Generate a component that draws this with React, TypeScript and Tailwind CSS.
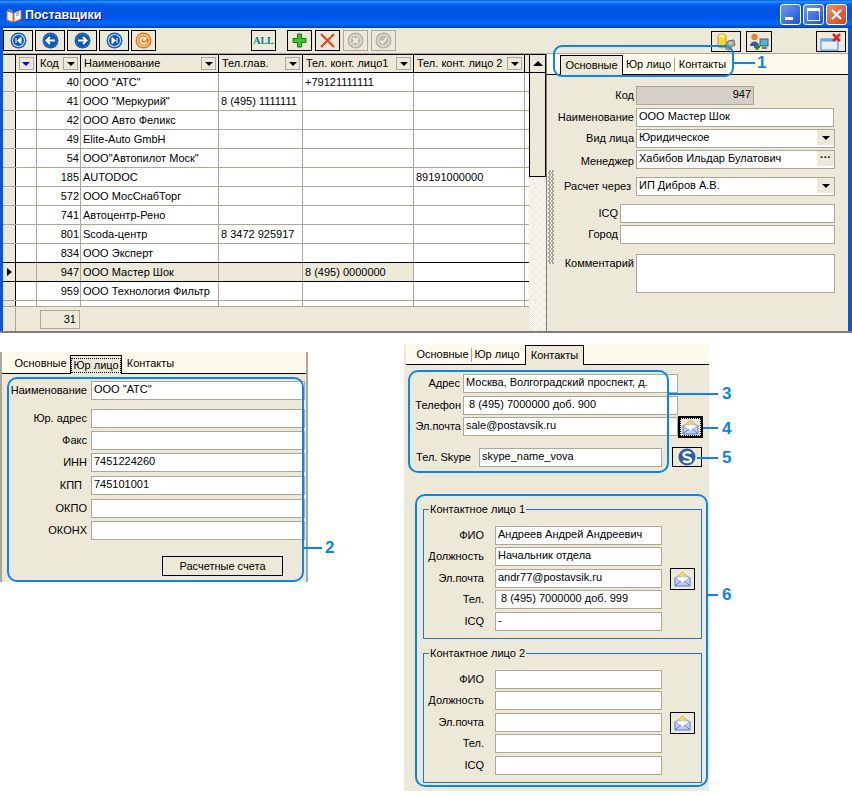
import React from "react";

const rows = [
  ["40", 'ООО "АТС"', "", "+79121111111", ""],
  ["41", 'ООО "Меркурий"', "8 (495) 1111111", "", ""],
  ["42", "ООО Авто Феликс", "", "", ""],
  ["49", "Elite-Auto GmbH", "", "", ""],
  ["54", 'ООО"Автопилот Моск"', "", "", ""],
  ["185", "AUTODOC", "", "", "89191000000"],
  ["572", "ООО МосСнабТорг", "", "", ""],
  ["741", "Автоцентр-Рено", "", "", ""],
  ["801", "Scoda-центр", "8 3472 925917", "", ""],
  ["834", "ООО Эксперт", "", "", ""],
  ["947", "ООО Мастер Шок", "", "8 (495) 0000000", ""],
  ["959", "ООО Технология Фильтр", "", "", ""],
  ["971", 'ООО "Югинвест Групп"', "7 (347) 000", "8 90707 10001", ""],
];

function Nav({ kind }: { kind: "first" | "prev" | "next" | "last" | "orange" }) {
  const orange = kind === "orange";
  const outer = orange ? "#d9781c" : "#1b5fb5";
  const mid = orange ? "#fbd9a8" : "#bcd6f5";
  const inner = orange ? "#f08a1e" : "#0f55b8";
  return (
    <svg width="17" height="17" viewBox="0 0 17 17">
      <circle cx="8.5" cy="8.5" r="8" fill={outer} />
      <circle cx="8.5" cy="8.5" r="6.6" fill={mid} />
      <circle cx="8.5" cy="8.5" r={kind === "prev" || kind === "next" ? 6.6 : 5.4} fill={inner} />
      {kind === "first" && <path d="M6 6v5M11 5.5v6L7.5 8.5z" stroke="#fff" fill="#fff" strokeWidth="1" />}
      {kind === "last" && <path d="M11 6v5M6 5.5v6l3.5-3z" stroke="#fff" fill="#fff" strokeWidth="1" />}
      {kind === "prev" && <path d="M13 8.5H5M8 5L4.5 8.5 8 12" stroke="#fff" fill="none" strokeWidth="2" />}
      {kind === "next" && <path d="M4 8.5h8M9 5l3.5 3.5L9 12" stroke="#fff" fill="none" strokeWidth="2" />}
      {orange && <path d="M11 6.5A3.2 3.2 0 1 0 11.5 10M8.5 8.5l3-3" stroke="#fff" fill="none" strokeWidth="1.6" />}
    </svg>
  );
}

function GrayIcon({ kind }: { kind: "x" | "check" }) {
  return (
    <svg width="17" height="17" viewBox="0 0 17 17">
      <circle cx="8.5" cy="8.5" r="8" fill="#b5b3a6" />
      <circle cx="8.5" cy="8.5" r="6.4" fill="#e3e1d6" />
      <circle cx="8.5" cy="8.5" r="5" fill="#bdbbae" />
      {kind === "x" ? (
        <path d="M6 6l5 5M11 6l-5 5" stroke="#f3f2ea" strokeWidth="1.8" />
      ) : (
        <path d="M5.5 8.5l2.2 2.4L11.5 6" stroke="#f3f2ea" strokeWidth="1.8" fill="none" />
      )}
    </svg>
  );
}

function Envelope() {
  return (
    <svg width="17" height="16" viewBox="0 0 17 16">
      <path d="M2 6.500L8.500 1 15 6.500z" fill="#f8dc62" stroke="#b8a650" strokeWidth="0.8" />
      <path d="M1 6.500h15v8.500H1z" fill="#bcd0f8" stroke="#5a78b8" />
      <path d="M1 6.500l7.500 5.500 7.500-5.500-7.500-1.500z" fill="#ffffff" stroke="#8ea3cf" strokeWidth="0.7" />
      <path d="M1 15l5.600-5M16 15l-5.600-5" stroke="#5a78b8" fill="none" />
    </svg>
  );
}

function Tab({ children, cls }: { children: React.ReactNode; cls: string }) {
  return <div className={"flex items-center justify-center whitespace-nowrap " + cls}>{children}</div>;
}

function Field({
  label,
  value,
  labelCls,
  inputCls,
  rowCls,
  children,
}: {
  label: string;
  value?: string;
  labelCls: string;
  inputCls: string;
  rowCls: string;
  children?: React.ReactNode;
}) {
  return (
    <div className={"flex items-start h-[19px] " + rowCls}>
      <div className={"text-right shrink-0 leading-[19px] whitespace-nowrap " + labelCls}>{label}</div>
      <div className={"h-[19px] box-border border border-[#aca899] bg-white px-[2px] leading-[15px] whitespace-nowrap overflow-hidden shrink-0 " + inputCls}>
        {value}
      </div>
      {children}
    </div>
  );
}

function MailBtn() {
  return (
    <div className="ml-[8px] -mt-[1px] w-[25px] h-[22px] border border-black flex items-center justify-center shrink-0">
      <Envelope />
    </div>
  );
}

function Group({ title, cls, vals }: { title: string; cls: string; vals: string[] }) {
  const lc = "w-[61px] pr-[1px]";
  const ic = "w-[167px] ml-[10px]";
  return (
    <div className={"relative ml-[19px] w-[279px] h-[130px] box-border border border-[#2a6fd0] pt-[16px] " + cls}>
      <span className="absolute -top-[8px] left-[5px] bg-[#ece9d8] px-[1px] leading-[15px] whitespace-nowrap">{title}</span>
      <Field label="ФИО" value={vals[0]} labelCls={lc} inputCls={ic} rowCls="" />
      <Field label="Должность" value={vals[1]} labelCls={lc} inputCls={ic} rowCls="mt-[2px]" />
      <Field label="Эл.почта" value={vals[2]} labelCls={lc} inputCls={ic} rowCls="mt-[3px]">
        <MailBtn />
      </Field>
      <Field label="Тел." value={vals[3]} labelCls={lc} inputCls={ic + " pl-[5px]"} rowCls="mt-[2px]" />
      <Field label="ICQ" value={vals[4]} labelCls={lc} inputCls={ic} rowCls="mt-[3px]" />
    </div>
  );
}

function Callout({ n, cls, numCls }: { n: string; cls: string; numCls: string }) {
  return (
    <>
      <div className={"absolute h-[2px] bg-[#0a84f0] " + cls} />
      <div className={"absolute text-[#0a84f0] font-bold text-[17px] leading-[17px] " + numCls}>{n}</div>
    </>
  );
}

const btn = "h-[21px] box-border border border-black flex items-center justify-center shrink-0";

export default function App() {
  return (
    <div className="relative w-[852px] h-[796px] bg-white overflow-hidden text-[11px] text-black font-['Liberation_Sans',sans-serif]">
      {/* Main window */}
      <div className="h-[333px] box-border border-b-2 border-[#7f7f7f] flex flex-col">
        <div className="h-[28px] shrink-0 flex items-center bg-[linear-gradient(to_bottom,#0058EE_0%,#3593FF_6%,#127DFF_10%,#0262EE_16%,#0057E5_24%,#0054E3_40%,#0055EB_60%,#005BF5_72%,#026AFE_80%,#0062EF_88%,#0052D6_94%,#0040AB_100%)]">
          <svg className="ml-[6px] mt-[3px]" width="16" height="15" viewBox="0 0 16 15">
            <path d="M1 3l6 2v9l-6-2z" fill="#f6f3ea" stroke="#d9722a" />
            <path d="M15 2L8 5v9l7-3z" fill="#fff" stroke="#d9722a" />
            <path d="M2 1l5 3" stroke="#3aa0d8" strokeWidth="1.5" />
            <path d="M10 6l3-1.500M10 8l3-1.500" stroke="#4a8fd0" />
          </svg>
          <div className="ml-[3px] mt-[3px] text-white font-bold text-[12.5px] [text-shadow:1px_1px_#0f1089] whitespace-nowrap">Поставщики</div>
          <div className="ml-auto mr-[5px] flex gap-[2px]">
            <div className="w-[21px] h-[21px] box-border border border-white rounded-[3px] bg-[linear-gradient(135deg,#6f9bf5,#1f4fd8)] flex items-end pl-[4px] pb-[4px]">
              <div className="w-[8px] h-[3px] bg-white" />
            </div>
            <div className="w-[21px] h-[21px] box-border border border-white rounded-[3px] bg-[linear-gradient(135deg,#6f9bf5,#1f4fd8)] flex items-center justify-center">
              <div className="w-[13px] h-[13px] box-border border border-white border-t-[3px]" />
            </div>
            <div className="w-[21px] h-[21px] box-border border border-white rounded-[3px] bg-[linear-gradient(135deg,#f0906a,#d0401c)] flex items-center justify-center">
              <svg width="13" height="13" viewBox="0 0 13 13">
                <path d="M2 2l9 9M11 2l-9 9" stroke="#fff" strokeWidth="2.2" />
              </svg>
            </div>
          </div>
        </div>

        <div className="flex-1 flex flex-col min-h-0 border-l-[3px] border-r-[4px] border-[#0a54de]">
          {/* Toolbar */}
          <div className="h-[26px] shrink-0 bg-[#ece9d8] border-b border-[#aca899] flex items-start pt-[2px]">
            <div className={btn + " w-[30px]"}><Nav kind="first" /></div>
            <div className={btn + " w-[30px] ml-[2px]"}><Nav kind="prev" /></div>
            <div className={btn + " w-[30px] ml-[2px]"}><Nav kind="next" /></div>
            <div className={btn + " w-[30px] ml-[2px]"}><Nav kind="last" /></div>
            <div className={btn + " w-[25px] ml-[2px]"}><Nav kind="orange" /></div>
            <div className={btn + " w-[25px] ml-[95px] text-[#008080] font-bold text-[10px] font-['Liberation_Serif',serif]"}>ALL</div>
            <div className={btn + " w-[25px] ml-[11px]"}>
              <svg width="15" height="15" viewBox="0 0 15 15">
                <path d="M5.500 1h4v4.500H14v4H9.500V14h-4V9.500H1v-4h4.500z" fill="#39c92f" stroke="#167a16" />
              </svg>
            </div>
            <div className={btn + " w-[25px] ml-[3px]"}>
              <svg width="17" height="17" viewBox="0 0 17 17">
                <path d="M2 2l13 13M15 2L2 15" stroke="#e8401c" strokeWidth="2" />
              </svg>
            </div>
            <div className={btn + " w-[25px] ml-[3px] !border-[#aca899]"}><GrayIcon kind="x" /></div>
            <div className={btn + " w-[25px] ml-[3px] !border-[#aca899]"}><GrayIcon kind="check" /></div>
            <div className={btn + " w-[30px] ml-[315px] mt-[1px]"}>
              <svg width="20" height="18" viewBox="0 0 20 18">
                <path d="M2 3c0-2.500 8-2.500 8 0v10c0 2.500-8 2.500-8 0z" fill="#f5d93a" stroke="#c49a12" />
                <ellipse cx="6" cy="3" rx="3.500" ry="1.500" fill="#fdf09a" />
                <path d="M9 14l3-6 6-1 1 5-4 2-2 3-3-1z" fill="#a8a8a0" stroke="#6a6a64" />
                <path d="M13 10h3" stroke="#eeeeee" />
              </svg>
            </div>
            <div className={btn + " w-[26px] ml-[5px] mt-[1px]"}>
              <svg width="20" height="18" viewBox="0 0 20 18">
                <circle cx="5.500" cy="4" r="3.200" fill="#e8812a" />
                <path d="M1 13c0-6 9-6 9 0z" fill="#2f55c4" />
                <rect x="11" y="6" width="8" height="7" fill="#48b4dc" stroke="#555" />
                <path d="M8 11v6M5 14h6" stroke="#1c8a2c" strokeWidth="2.500" />
                <path d="M13 15h5" stroke="#777" strokeWidth="2" />
              </svg>
            </div>
            <div className={btn + " w-[30px] ml-[44px] mt-[1px]"}>
              <svg width="24" height="18" viewBox="0 0 24 18">
                <rect x="2" y="6" width="17" height="11" fill="#e8f2ff" stroke="#3f83d8" />
                <rect x="2" y="6" width="17" height="2.500" fill="#6aa6ea" />
                <path d="M14 1l7 7M21 1l-7 7" stroke="#d8261c" strokeWidth="2.500" />
              </svg>
            </div>
          </div>

          {/* Body */}
          <div className="flex-1 flex min-h-0 bg-[#ece9d8]">
            <div className="w-[526px] shrink-0 flex flex-col">
              <div className="h-[252px] overflow-hidden bg-white">
                <div className="flex h-[19px] box-border border-t border-b border-black bg-[#ece9d8] items-stretch">
                  <div className="w-[13px] box-border border-r border-black" />
                  <div className="w-[21px] box-border border-r border-black flex items-center justify-center">
                    <div className="w-[15px] h-[13px] box-border border border-[#aca899] flex items-center justify-center">
                      <div className="w-0 h-0 border-l-[4px] border-r-[4px] border-t-[4px] border-l-transparent border-r-transparent border-t-[#0000ff]" />
                    </div>
                  </div>
                  {[
                    ["Код", "w-[44px]"],
                    ["Наименование", "w-[138px]"],
                    ["Тел.глав.", "w-[84px]"],
                    ["Тел. конт. лицо1", "w-[111px]"],
                    ["Тел. конт. лицо 2", "w-[111px]"],
                  ].map(([t, w]) => (
                    <div key={t} className={"box-border border-r border-black flex items-center pl-[3px] pr-[2px] whitespace-nowrap " + w}>
                      <span className="flex-1 overflow-hidden">{t}</span>
                      <div className="w-[15px] h-[13px] box-border border border-[#aca899] flex items-center justify-center shrink-0">
                        <div className="w-0 h-0 border-l-[4px] border-r-[4px] border-t-[4px] border-l-transparent border-r-transparent border-t-black" />
                      </div>
                    </div>
                  ))}
                </div>
                {rows.map((r, i) => {
                  const sel = r[0] === "947";
                  const bb = sel ? "border-b border-black" : "border-b border-[#aca899]";
                  const cellBg = sel ? "bg-[#ece9d8]" : "";
                  const cell = "box-border border-r border-[#aca899] px-[2px] leading-[18px] whitespace-nowrap overflow-hidden ";
                  return (
                    <div key={i} className={"flex h-[19px] box-border " + bb + (sel ? " -mt-[1px] h-[20px] border-t" : "")}>
                      <div className="w-[13px] box-border bg-[#ece9d8] border-r border-black flex items-center justify-center">
                        {sel && <div className="w-0 h-0 border-t-[4px] border-b-[4px] border-l-[5px] border-t-transparent border-b-transparent border-l-black" />}
                      </div>
                      <div className={cell + "w-[21px] " + cellBg} />
                      <div className={cell + "w-[44px] text-right !pr-[1px] " + cellBg}>{r[0]}</div>
                      <div className={cell + "w-[138px] " + cellBg}>{r[1]}</div>
                      <div className={cell + "w-[84px] " + cellBg}>{r[2]}</div>
                      <div className={cell + "w-[111px] " + cellBg}>{r[3]}</div>
                      <div className={cell + "w-[111px]"}>{r[4]}</div>
                    </div>
                  );
                })}
              </div>
              <div className="h-[25px] shrink-0 box-border border-t border-[#aca899] flex items-start">
                <div className="w-[13px] h-full box-border border-r border-[#aca899]" />
                <div className="ml-[24px] mt-[3px] w-[40px] h-[19px] box-border border border-[#aca899] text-right pr-[3px] leading-[17px]">31</div>
              </div>
            </div>
            {/* scrollbar */}
            <div className="w-[17px] shrink-0 flex flex-col bg-[repeating-conic-gradient(#ece9d8_0_25%,#ffffff_0_50%)] bg-[length:2px_2px]">
              <div className="h-[19px] box-border border border-black bg-[#ece9d8] flex items-center justify-center">
                <div className="w-0 h-0 border-l-[5px] border-r-[5px] border-b-[5px] border-l-transparent border-r-transparent border-b-black" />
              </div>
              <div className="h-[104px] box-border border border-t-0 border-black bg-[#ece9d8]" />
            </div>
            {/* Form */}
            <div className="relative w-[302px] shrink-0 box-border border-l border-[#7f7f7f]">
              <div className="absolute left-[1px] top-[116px] w-[6px] h-[94px] bg-[repeating-conic-gradient(#aca899_0_25%,#ffffff_0_50%)] bg-[length:3px_4px]" />
              <div className="h-[21px] box-border bg-[#fffbec] border-b border-black flex items-end pl-[13px]">
                <Tab cls="w-[63px] h-[20px] box-border border border-b-0 border-black bg-[#ece9d8] -mb-[1px]">Основные</Tab>
                <Tab cls="w-[51px] h-[19px]">Юр лицо</Tab>
                <div className="w-px h-[14px] mb-[2px] bg-[#aca899]" />
                <Tab cls="w-[55px] h-[19px]">Контакты</Tab>
              </div>
              <Field label="Код" value="947" labelCls="w-[87px]" inputCls="ml-[2px] w-[118px] !bg-[#d4d0c8] text-right" rowCls="mt-[11px]" />
              <Field label="Наименование" value="ООО Мастер Шок" labelCls="w-[87px]" inputCls="ml-[2px] w-[198px]" rowCls="mt-[3px]" />
              <Field label="Вид лица" labelCls="w-[87px]" inputCls="ml-[2px] w-[199px] relative" rowCls="mt-[2px]" value="Юридическое" />
              <Field label="Менеджер" labelCls="w-[87px] pt-[2px]" inputCls="ml-[2px] w-[199px]" rowCls="mt-[2px]" value="Хабибов Ильдар Булатович" />
              <Field label="Расчет через" value="ИП Дибров А.В." labelCls="w-[84px]" inputCls="ml-[5px] w-[199px]" rowCls="mt-[8px]" />
              <Field label="ICQ" labelCls="w-[71px]" inputCls="ml-[2px] w-[215px]" rowCls="mt-[8px]" />
              <Field label="Город" labelCls="w-[71px]" inputCls="ml-[2px] w-[215px]" rowCls="mt-[2px]" />
              <div className="flex items-start mt-[10px]">
                <div className="w-[87px] text-right leading-[19px]">Комментарий</div>
                <div className="ml-[2px] w-[199px] h-[39px] box-border border border-[#aca899] bg-white" />
              </div>
              {/* control buttons inside combos */}
              <div className="absolute left-[270px] top-[76px] w-[17px] h-[15px] bg-[#ece9d8] flex items-center justify-center">
                <div className="w-0 h-0 border-l-[4px] border-r-[4px] border-t-[4px] border-l-transparent border-r-transparent border-t-black" />
              </div>
              <div className="absolute left-[270px] top-[97px] w-[17px] h-[15px] bg-[#ece9d8] flex items-center justify-center font-bold leading-[10px] pb-[3px]">···</div>
              <div className="absolute left-[270px] top-[124px] w-[17px] h-[15px] bg-[#ece9d8] flex items-center justify-center">
                <div className="w-0 h-0 border-l-[4px] border-r-[4px] border-t-[4px] border-l-transparent border-r-transparent border-t-black" />
              </div>
            </div>
          </div>
        </div>
      </div>

      {/* Lower panels */}
      <div className="flex items-start">
        <div className="mt-[19px] w-[308px] h-[230px] shrink-0 box-border border-l-2 border-r-2 border-[#aca899] bg-[#ece9d8]">
          <div className="h-[22px] box-border bg-[#fffbec] border-b border-black flex items-end pl-[9px]">
            <Tab cls="w-[59px] h-[19px]">Основные</Tab>
            <Tab cls="w-[52px] h-[19px] box-border border border-b-0 border-black bg-[#ece9d8] -mb-[1px]">
              <span className="border border-dotted border-black px-[1px] leading-[13px]">Юр лицо</span>
            </Tab>
            <Tab cls="w-[57px] h-[19px]">Контакты</Tab>
          </div>
          <Field label="Наименование" value={'ООО "АТС"'} labelCls="w-[85px]" inputCls="ml-[4px] w-[214px]" rowCls="mt-[7px]" />
          <Field label="Юр. адрес" labelCls="w-[85px]" inputCls="ml-[4px] w-[214px]" rowCls="mt-[9px]" />
          <Field label="Факс" labelCls="w-[85px]" inputCls="ml-[4px] w-[214px]" rowCls="mt-[3px]" />
          <Field label="ИНН" value="7451224260" labelCls="w-[85px]" inputCls="ml-[4px] w-[214px]" rowCls="mt-[3px]" />
          <Field label="КПП" value="745101001" labelCls="w-[80px]" inputCls="ml-[9px] w-[214px]" rowCls="mt-[4px]" />
          <Field label="ОКПО" labelCls="w-[85px]" inputCls="ml-[4px] w-[214px]" rowCls="mt-[4px]" />
          <Field label="ОКОНХ" labelCls="w-[85px]" inputCls="ml-[4px] w-[214px]" rowCls="mt-[3px]" />
          <div className="ml-[160px] mt-[16px] w-[121px] h-[20px] box-border border border-black flex items-center justify-center">Расчетные счета</div>
        </div>

        <div className="ml-[96px] mt-[11px] w-[305px] h-[447px] shrink-0 bg-[#ece9d8]">
          <div className="h-[21px] box-border bg-[#fffbec] border-b border-black flex items-end ml-[2px] pl-[8px]">
            <Tab cls="w-[57px] h-[19px]">Основные</Tab>
            <div className="w-px h-[14px] mb-[2px] bg-[#aca899]" />
            <Tab cls="w-[50px] h-[19px]">Юр лицо</Tab>
            <Tab cls="w-[59px] h-[20px] box-border border border-b-0 border-black bg-[#ece9d8] -mb-[1px] ml-[3px]">Контакты</Tab>
          </div>
          <Field label="Адрес" value="Москва, Волгоградский проспект, д." labelCls="w-[56px]" inputCls="ml-[3px] w-[215px]" rowCls="mt-[9px]" />
          <Field label="Телефон" value=" 8 (495) 7000000 доб. 900" labelCls="w-[57px]" inputCls="ml-[2px] w-[215px] pl-[5px]" rowCls="mt-[3px]" />
          <Field label="Эл.почта" value="sale@postavsik.ru" labelCls="w-[57px]" inputCls="ml-[2px] w-[215px]" rowCls="mt-[2px]">
            <div className="-mt-[1px] w-[25px] h-[22px] box-border border-2 border-black flex items-center justify-center shrink-0">
              <div className="w-[21px] h-[18px] border border-dotted border-black flex items-center justify-center">
                <Envelope />
              </div>
            </div>
          </Field>
          <Field label="Тел. Skype" value="skype_name_vova" labelCls="w-[67px]" inputCls="ml-[8px] w-[183px]" rowCls="mt-[12px]">
            <div className="ml-[10px] -mt-[1px] w-[30px] h-[20px] box-border border border-black flex items-center justify-center shrink-0">
              <svg width="18" height="18" viewBox="0 0 18 18">
                <circle cx="9" cy="9" r="8.500" fill="#2a5fa8" />
                <path d="M13 5.500C11 3.500 5.500 4 5.500 6.800c0 3.400 7.500 1.800 7.500 5 0 2.700-5.500 3-7.800.8" stroke="#fff" strokeWidth="2.400" fill="none" />
              </svg>
            </div>
          </Field>
          <Group title="Контактное лицо 1" cls="mt-[42px]" vals={["Андреев Андрей Андреевич", "Начальник отдела", "andr77@postavsik.ru", "8 (495) 7000000 доб. 999", "-"]} />
          <Group title="Контактное лицо 2" cls="mt-[14px]" vals={["", "", "", "", ""]} />
        </div>
      </div>

      {/* Annotation overlays */}
      <div className="absolute left-[553px] top-[45px] w-[181px] h-[32px] box-border border-2 border-[#0a84f0] rounded-[9px]" />
      <Callout n="1" cls="left-[734px] top-[62px] w-[21px]" numCls="left-[757px] top-[54px]" />
      <div className="absolute left-[7px] top-[377px] w-[297px] h-[205px] box-border border-2 border-[#0a84f0] rounded-[10px]" />
      <Callout n="2" cls="left-[303px] top-[547px] w-[19px]" numCls="left-[325px] top-[539px]" />
      <div className="absolute left-[408px] top-[370px] w-[261px] h-[103px] box-border border-2 border-[#0a84f0] rounded-[10px]" />
      <Callout n="3" cls="left-[668px] top-[393px] w-[50px]" numCls="left-[722px] top-[385px]" />
      <Callout n="4" cls="left-[703px] top-[427px] w-[15px]" numCls="left-[722px] top-[420px]" />
      <Callout n="5" cls="left-[697px] top-[457px] w-[21px]" numCls="left-[722px] top-[449px]" />
      <div className="absolute left-[415px] top-[494px] w-[293px] h-[293px] box-border border-2 border-[#0a84f0] rounded-[10px]" />
      <Callout n="6" cls="left-[707px] top-[594px] w-[11px]" numCls="left-[722px] top-[586px]" />
    </div>
  );
}
